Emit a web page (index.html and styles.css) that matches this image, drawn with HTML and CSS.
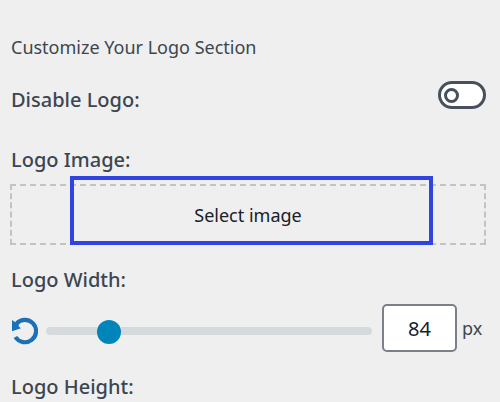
FILE: index.html
```html
<!DOCTYPE html>
<html lang="en">
<head>
<meta charset="utf-8">
<title>Logo Section</title>
<link rel="stylesheet" href="styles.css">
</head>
<body>
<main class="panel">
  <p class="intro">Customize Your Logo Section</p>
  <div class="toggle-row">
    <label class="label" for="disable-logo">Disable Logo:</label>
    <input class="toggle" type="checkbox" id="disable-logo">
  </div>
  <section class="field">
    <span class="label" id="image-label">Logo Image:</span>
    <div class="dropzone">
      <button class="select-image" type="button" aria-describedby="image-label">Select image</button>
      <span class="highlight"></span>
    </div>
  </section>
  <section class="field">
    <label class="label" for="logo-width">Logo Width:</label>
    <div class="slider-row">
      <button class="reset" type="button" aria-label="Reset width">
        <svg viewBox="0 0 28 28" width="28" height="28" aria-hidden="true">
          <path d="M6.5 6.6A11.2 11.2 0 1 1 5.4 20" fill="none" stroke="#1c70b8" stroke-width="4.2"/>
          <path d="M2 3V14.2L11 11.2L8.6 9.2L9 6L5.2 5.2Z" fill="#1c70b8"/>
        </svg>
      </button>
      <input class="slider" type="range" id="logo-width" min="0" max="500" value="84">
      <input class="number" type="text" inputmode="numeric" id="width-value" value="84" aria-label="Logo width value">
      <label class="unit" for="width-value">px</label>
    </div>
  </section>
  <section class="field">
    <span class="label">Logo Height:</span>
  </section>
</main>
</body>
</html>
```

FILE: styles.css
```css
*,
*::before {
  box-sizing: border-box;
}

body {
  margin: 0;
  background: #efefef;
  color: #3c4650;
  font-family: "Noto Sans", "Open Sans", sans-serif;
  font-size: 18px;
  line-height: 24px;
}

button,
input {
  margin: 0;
  padding: 0;
  font: inherit;
}

.panel {
  padding: 35px 14px 0 10px;
}

.intro {
  margin: 0 0 22px;
}

.label {
  font-size: 20px;
  font-weight: 500;
}

.intro,
.label {
  padding-left: 1px;
}

.toggle-row {
  display: flex;
  justify-content: space-between;
  align-items: flex-start;
  margin-bottom: 36px;
}

.toggle-row .label {
  padding-top: 7px;
}

.toggle {
  appearance: none;
  display: flex;
  align-items: center;
  width: 48px;
  height: 28px;
  padding-left: 3px;
  border: 3px solid #46515c;
  border-radius: 14px;
  background: #fff;
}

.toggle::before {
  content: "";
  width: 15px;
  height: 15px;
  border: 3px solid #46515c;
  border-radius: 50%;
}

.toggle:checked {
  justify-content: flex-end;
  padding: 0 3px 0 0;
}

.field {
  display: flex;
  flex-direction: column;
  gap: 12px;
  margin-bottom: 23px;
}

.field:last-child {
  margin-bottom: 0;
}

.dropzone {
  position: relative;
}

.select-image {
  display: block;
  width: 100%;
  height: 61px;
  border: 2px dashed #c1c4c7;
  background: none;
  color: #18202a;
}

.highlight {
  position: absolute;
  inset: -8px 53px 0 60px;
  border: 4px solid #3144e2;
  pointer-events: none;
}

.slider-row {
  display: flex;
  align-items: center;
}

.reset,
.slider {
  margin-top: 5px;
}

.reset {
  display: flex;
  width: 28px;
  height: 28px;
  margin-right: 8px;
  border: 0;
  background: none;
}

.slider {
  appearance: none;
  flex: 1;
  min-width: 0;
  height: 26px;
  margin-right: 10px;
  background: none;
}

.slider::-webkit-slider-runnable-track {
  height: 8px;
  border-radius: 4px;
  background: #d5dadd;
}

.slider::-webkit-slider-thumb {
  appearance: none;
  width: 24px;
  height: 24px;
  margin-top: -7px;
  border-radius: 50%;
  background: #0085ba;
}

.number {
  width: 75px;
  height: 48px;
  margin-right: 5px;
  border: 2px solid #7b8088;
  border-radius: 5px;
  background: #fff;
  color: #18202a;
  font-size: 20px;
  text-align: center;
}

.unit {
  width: 24px;
}
```
